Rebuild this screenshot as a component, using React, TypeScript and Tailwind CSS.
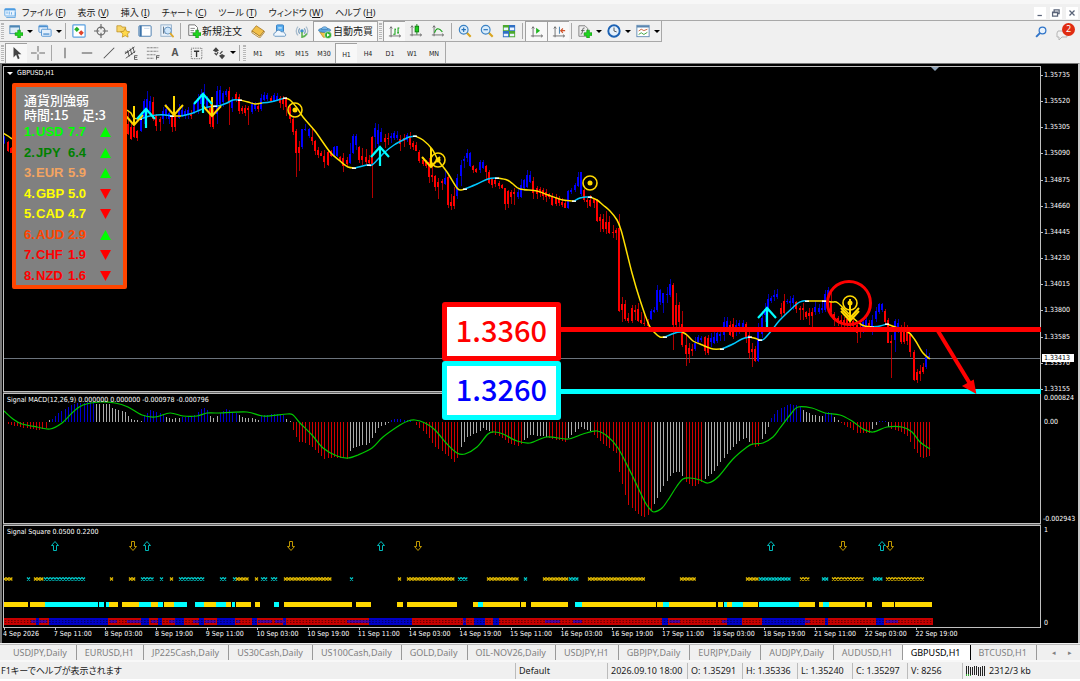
import type { ReactNode } from "react"
import clsx from "clsx"

const STEP = 3.168
const barX = (k: number) => 4.4 + STEP * k

// one token per bar: colour, high-low, body top-bottom
const CANDLES: { from: number; bars: string }[] = [
    { from: 0, bars: "b136-144/137-143 r141-152/142-151 r147-153/148-153" },
    {
        from: 39,
        bars: `r112-135/124-134 r122-140/127-139 r126-138/127-137 r130-141/131-138 b112-132/114-131
        b99-124/101-119 b91-114/99-109 b96-114/101-111 r97-121/102-119 r114-131/116-126 r117-131/119-122
        b107-124/111-119 b104-119/109-116 b109-124/113-119 r114-132/117-127 r114-131/116-127 b104-119/108-118
        b107-117/110-115 b109-119/111-116 b107-119/110-115 r110-119/113-116 b101-114/104-112 b94-114/98-111
        b89-107/94-104 b84-104/92-100 b96-109/98-107 r104-127/108-124 r107-129/110-127 b86-124/91-114
        b86-106/90-104 b91-107/93-102 b89-97/91-95 r87-125/91-102 b97-112/100-108 r92-102/94-100
        r94-114/97-111 r106-114/108-111 r105-116/108-113 r106-125/108-110 b102-114/104-112 b102-111/104-109
        r104-112/106-109 b94-111/98-109 b92-101/95-100 b93-101/95-99`,
    },
    {
        from: 84,
        bars: `r96-102/98-101 b93-102/95-101 b93-101/96-100 r96-108/98-103 r96-110/98-104 r97-116/98-107
        r104-123/107-119 r117-135/119-132 r129-177/131-153 r141-171/147-153 b129-149/129-147 b124-131/129-130
        b128-138/129-136 r127-145/137-141 r140-155/141-151 r147-158/150-155 r151-156/153-156 r150-168/156-162
        r151-166/152-165 r150-157/151-156 b146-157/147-156 b146-157/146-156 r156-162/157-161 r153-172/158-166
        r157-166/160-164 b143-164/154-163 b134-154/136-153 b134-150/136-145 r146-163/147-160 r148-165/156-160
        r149-165/157-162 r155-166/160-163 r136-198/137-164 b123-148/128-137 b124-149/130-144 b128-142/132-142
        r134-148/138-142 r133-145/138-139 b133-143/136-138 b131-140/133-138 b131-140/135-138 r135-151/139-144
        r134-147/138-141 b133-142/135-140 r132-149/136-145 r141-150/143-147 r142-151/145-151 r150-163/152-161
        r157-166/160-164 r160-168/162-166 r158-183/162-177 r165-182/175-177 r175-191/176-187 r178-199/182-187
        r179-190/181-183 b171-185/178-184 r175-208/177-205 r194-210/202-206 r187-209/196-206 b174-199/178-196
        b160-186/165-176 b156-168/159-161 b149-162/153-158 b152-167/153-166 r165-173/166-170 r168-173/169-172
        b160-173/162-170 b160-169/162-168 r165-179/166-172 r170-184/172-183 r178-188/179-185 r179-187/180-184
        r181-189/183-186 r184-189/185-188 r188-210/188-204 r190-208/191-204 r190-204/192-197 r188-205/192-194
        b188-199/192-197 b179-198/185-197 b179-191/180-188 b170-188/175-187 b171-183/175-182 r177-199/181-193
        r186-199/188-194 r187-197/189-193 r188-200/190-196 r189-202/192-197 r193-199/194-197 r193-206/197-205
        r194-206/197-204 r196-206/199-203 r198-207/202-205`,
    },
    {
        from: 177,
        bars: `r200-208/203-208 b190-209/191-208 b188-194/190-192 b183-192/185-190 b172-187/177-186 b172-196/172-194
        r189-202/190-200 r197-208/200-202 r195-207/200-206 r198-208/199-203 r199-222/200-221 r214-232/217-221
        r214-232/219-229 r211-234/222-229 r216-234/222-233 r225-238/232-233 r228-240/230-233 r214-312/228-311
        r297-322/304-310 r300-321/304-319 r313-323/318-321 r305-323/308-321 r305-320/310-312 r303-322/309-321
        r312-324/320-323 r313-326/323-324 r319-328/322-326 b309-320/311-319 b307-313/310-312 b285-312/290-310
        b289-305/290-302 b293-313/293-303 b287-303/294-295 b279-297/284-295 r283-350/285-325 r293-329/305-325
        r302-327/305-322 r311-347/324-345 r335-366/345-354 r343-363/348-354 r344-356/349-351 b337-351/343-349
        b335-344/337-342 b336-342/338-340 r336-355/337-351 r335-355/338-353 b333-347/338-342 b330-344/337-343
        b327-343/333-341 b328-341/334-336 b317-341/322-335 b317-328/321-327 r321-336/325-335 r318-339/324-337
        b320-336/325-330 b320-334/323-326 b320-331/323-328 r322-343/324-338 r331-359/335-353 r343-367/349-352
        r346-362/349-361 b323-362/328-361 b311-338/318-334 b303-322/309-315 b294-312/299-310 b296-303/298-301
        b290-301/295-297 b289-299/294-297 r303-317/308-314 r294-315/301-313 b299-304/301-302 b296-308/301-303
        b295-310/298-303 r301-313/302-309 r306-320/308-310 r303-320/308-310 r311-319/312-317 r308-325/313-316
        r308-328/312-316 b301-315/307-312 b304-314/308-312 b302-313/308-310 b290-312/294-310 b287-303/290-300
        r290-315/302-312 r312-326/314-320 r316-326/318-323 r315-327/320-324 r317-328/320-325 r316-327/319-324
        r317-328/320-326 r318-328/321-326 r322-343/325-333 r325-338/327-332 b318-333/322-330 b316-330/320-326
        r320-332/323-329 b315-335/320-331 b307-322/311-319 b303-314/304-312 b303-312/304-310 r309-325/311-322
        r318-343/320-343 r335-378/341-343 b319-352/321-340 b319-333/323-330 r325-344/328-342 r322-344/328-342
        r325-345/330-341 r333-357/335-352 r350-381/352-380 r369-383/372-380 r365-381/371-374 r363-374/367-372
        b349-369/357-367 b353-358/356-357`,
    },
]

const CANDLE_LIST = CANDLES.flatMap(({ from, bars }) =>
    bars
        .trim()
        .split(/\s+/)
        .map((token, i) => {
            const [high, low, top, bottom] = token.slice(1).split(/[-/]/).map(Number)
            return { x: Math.round(barX(from + i)), up: token[0] === "b", high, low, top, bottom }
        })
)

const AVERAGE: [string, string][] = [
    ["#ffe000", "3,133 8,136 12,139"],
    ["#ffe000", "127,110 131,113 134,118 140,119"],
    ["#00c8ff", "140,119 150,116 157,115 165,115 172,116"],
    ["#ffe000", "172,116 181,116"],
    ["#00c8ff", "181,116 193,113 200,110 208,107 218,106 227,103 233,100 240,100"],
    ["#ffe000", "240,100 248,102 255,104 262,103"],
    ["#00c8ff", "262,103 270,102 278,100 285,98"],
    ["#ffe000", "285,98 290,100 297,108 303,117 315,131 330,152 340,161 348,167 355,168"],
    ["#00c8ff", "355,168 367,165 372,165 379,158 385,152 394,145 403,140 409,137 415,136"],
    ["#ffe000", "415,136 423,140 432,149 438,160 447,172 457,188 461,190 465,189"],
    ["#00c8ff", "465,189 477,184 488,179 497,178"],
    ["#ffe000", "497,178 507,180 513,184 520,189 537,191 548,195 563,200 574,201"],
    ["#00c8ff", "574,201 580,198 586,197 590,197"],
    ["#ffe000", "590,197 597,200 603,205 610,211 617,220 621,230 625,245 632,273 640,300 649,325 655,333 660,337 665,337"],
    ["#00c8ff", "665,337 675,333 682,332"],
    ["#ffe000", "682,332 687,335 693,341 700,344 707,347 713,349 722,349"],
    ["#00c8ff", "722,349 733,344 742,339 750,337"],
    ["#ffe000", "750,337 754,338 760,340"],
    ["#00c8ff", "760,340 764,339 772,330 779,321 787,313 798,303 803,301 807,301"],
    ["#ffe000", "807,301 824,301 832,302 838,303 850,315 862,325 872,327"],
    ["#00c8ff", "872,327 880,326 887,324"],
    ["#ffe000", "887,324 895,327 908,332 915,340 923,353 930,359"],
]

// white dots where the average turns
const TURNS = [[140, 119], [172, 116], [215, 106], [240, 100], [285, 98], [354, 168], [369, 165], [415, 136], [465, 189], [497, 178], [574, 201], [590, 197], [665, 337], [722, 349], [750, 337], [760, 340], [807, 301], [824, 301], [872, 327], [887, 324]]

// histogram runs: colour, then x,y points the bar tips follow
const MACD: [string, number[][]][] = [
    ["#d00000", [[6, 424], [11, 425], [20, 427], [38, 430], [43, 429], [46, 428]]],
    ["#aaaaaa", [[47, 419], [50, 420]]],
    ["#0000d0", [[51, 420], [58, 413], [65, 409], [75, 403], [94, 402]]],
    ["#aaaaaa", [[95, 404], [109, 404], [112, 408], [125, 412], [130, 419], [142, 421]]],
    ["#0000d0", [[143, 416], [150, 410], [155, 412], [164, 414]]],
    ["#aaaaaa", [[164, 416], [172, 419], [181, 417]]],
    ["#0000d0", [[181, 417], [190, 416], [196, 414], [203, 407], [208, 411]]],
    ["#aaaaaa", [[208, 414], [214, 418], [219, 414]]],
    ["#0000d0", [[219, 413], [226, 409], [238, 414]]],
    ["#aaaaaa", [[238, 415], [246, 418], [252, 418], [258, 420], [261, 418]]],
    ["#0000d0", [[261, 416], [272, 414], [284, 415]]],
    ["#aaaaaa", [[284, 417], [290, 421]]],
    ["#d00000", [[291, 426], [296, 437], [299, 442], [306, 443], [312, 447], [320, 455], [324, 459], [333, 457], [347, 459]]],
    ["#aaaaaa", [[347, 454], [353, 448], [368, 444], [371, 440], [375, 433], [379, 427], [388, 423]]],
    ["#0000d0", [[390, 420], [398, 419], [412, 421]]],
    ["#d00000", [[414, 423], [425, 433], [435, 447], [443, 452], [454, 462], [458, 457]]],
    ["#aaaaaa", [[459, 450], [467, 437], [477, 433], [483, 428], [490, 432]]],
    ["#d00000", [[490, 432], [500, 437], [510, 444], [517, 446], [522, 443]]],
    ["#aaaaaa", [[522, 441], [531, 435], [547, 437]]],
    ["#d00000", [[547, 438], [567, 442]]],
    ["#aaaaaa", [[567, 439], [580, 427], [592, 432]]],
    ["#d00000", [[592, 433], [602, 443], [616, 453], [619, 472], [628, 505], [640, 516], [646, 517], [652, 508]]],
    ["#aaaaaa", [[652, 508], [660, 492], [667, 480], [672, 473], [680, 472], [684, 478]]],
    ["#d00000", [[685, 482], [693, 487], [703, 481]]],
    ["#aaaaaa", [[703, 480], [713, 472], [722, 460], [730, 450], [740, 440], [746, 438], [750, 443]]],
    ["#d00000", [[751, 444], [756, 448], [760, 444]]],
    ["#aaaaaa", [[760, 442], [765, 433], [770, 422]]],
    ["#0000d0", [[770, 419], [777, 410], [790, 404], [801, 406]]],
    ["#aaaaaa", [[801, 409], [812, 415], [823, 416]]],
    ["#0000d0", [[823, 413], [828, 412], [833, 413]]],
    ["#aaaaaa", [[833, 415], [839, 422]]],
    ["#d00000", [[840, 423], [850, 428], [857, 433], [870, 433]]],
    ["#aaaaaa", [[870, 431], [877, 424]]],
    ["#0000d0", [[878, 421], [887, 421]]],
    ["#aaaaaa", [[887, 426], [890, 428]]],
    ["#d00000", [[890, 429], [900, 431], [908, 437], [913, 448], [920, 457], [923, 458], [927, 457], [931, 455]]],
]

const tipAt = (points: number[][], x: number) => {
    for (let i = 1; i < points.length; i++) {
        const [x0, y0] = points[i - 1]
        const [x1, y1] = points[i]
        if (x <= x1) return y0 + ((y1 - y0) * Math.max(0, x - x0)) / (x1 - x0)
    }
    return points[points.length - 1][1]
}

const MACD_BARS = Array.from({ length: 293 }, (_, k) => barX(k)).flatMap((x) => {
    const run = MACD.find(([, p]) => x >= p[0][0] && x < p[p.length - 1][0])
    return run ? [{ x, color: run[0], y: tipAt(run[1], x) }] : []
})

const SIGNAL_LINE =
    "4,411 13,419 22,424 37,427 50,429 62,423 73,412 83,405 100,402 115,403 128,407 142,415 155,417 170,413 183,416 197,416 207,413 217,413 247,412 263,416 287,414 293,415 300,423 312,435 323,448 337,456 348,458 358,455 372,448 383,437 400,425 408,421 415,420 425,423 435,430 447,444 457,453 465,454 477,447 488,434 495,432 503,434 517,441 530,443 547,437 568,439 583,434 597,431 607,436 618,448 632,475 645,502 650,509 654,512 662,508 668,500 677,486 683,479 690,478 700,480 708,483 718,477 733,459 747,447 753,444 763,443 773,437 780,428 790,415 798,407 812,408 825,413 840,415 852,421 863,429 873,432 887,427 902,427 912,432 920,442 930,449"

// rounds the corners of a list of "x,y" points
const smooth = (points: string) => {
    const p = points.split(" ").map((pair) => pair.split(",").map(Number))
    return p
        .map(([x, y], i) => {
            if (i === 0) return `M${x} ${y}`
            const a = p[i - 2] ?? p[i - 1]
            const b = p[i - 1]
            const next = p[i + 1] ?? p[i]
            return `C${b[0] + (x - a[0]) / 6} ${b[1] + (y - a[1]) / 6} ${x - (next[0] - b[0]) / 6} ${y - (next[1] - b[1]) / 6} ${x} ${y}`
        })
        .join("")
}

type Span = [number, number]

const CROSS_GOLD: Span[] = [[3, 12], [34, 44], [110, 113], [129, 136], [170, 173], [236, 250], [255, 259], [284, 332], [398, 402], [407, 456], [487, 519], [543, 567], [588, 646], [680, 697], [746, 759], [800, 811], [832, 864], [886, 925]]
const CROSS_CYAN: Span[] = [[27, 30], [44, 84], [141, 154], [160, 163], [179, 205], [220, 227], [233, 236], [261, 268], [271, 278], [350, 353], [458, 468], [524, 528], [569, 579], [759, 792], [822, 829], [873, 883]]
const BLOCK_GOLD: Span[] = [[4, 28], [30, 45], [109, 118], [122, 139], [151, 158], [164, 174], [204, 216], [226, 231], [236, 251], [255, 260], [284, 352], [356, 371], [397, 403], [407, 457], [473, 478], [483, 520], [521, 526], [531, 568], [582, 656], [657, 663], [669, 716], [718, 723], [727, 732], [743, 758], [799, 815], [819, 823], [829, 865], [867, 872], [882, 894], [895, 932]]
const BLOCK_CYAN: Span[] = [[45, 98], [99, 104], [106, 109], [139, 151], [158, 163], [174, 187], [195, 204], [216, 226], [232, 235], [274, 279], [478, 483], [575, 582], [663, 669], [724, 727], [732, 743], [759, 799], [823, 829]]
const BASE_RED: Span[] = [[4, 36], [39, 49], [108, 141], [149, 158], [162, 175], [184, 199], [204, 217], [235, 252], [257, 283], [286, 369], [412, 463], [466, 474], [485, 493], [499, 662], [668, 727], [742, 762], [805, 825], [828, 876], [884, 933]]
// red cells that touch a blue run
const BASE_MIXED: Span[] = [[31, 36], [39, 47], [110, 117], [127, 141], [151, 157], [169, 175], [193, 199], [205, 216], [236, 240], [258, 272], [275, 285], [347, 369], [463, 466], [545, 560], [573, 582], [669, 680], [722, 727], [805, 810], [886, 898]]
const UP_ARROWS = [55, 147, 381, 771, 882]
const DOWN_ARROWS = [133, 291, 418, 843, 890]

const PRICES = ["1.35735", "1.35520", "1.35305", "1.35090", "1.34875", "1.34660", "1.34445", "1.34230", "1.34015", "1.33800", "1.33585", "1.33370", "1.33155"]
const TIMES = ["4 Sep 2026", "7 Sep 11:00", "8 Sep 03:00", "8 Sep 19:00", "9 Sep 11:00", "10 Sep 03:00", "10 Sep 19:00", "11 Sep 11:00", "14 Sep 03:00", "14 Sep 19:00", "15 Sep 11:00", "16 Sep 03:00", "16 Sep 19:00", "17 Sep 11:00", "18 Sep 03:00", "18 Sep 19:00", "21 Sep 11:00", "22 Sep 03:00", "22 Sep 19:00"]

const STRENGTH = [
    { name: "USD", value: "7.7", up: true, className: "text-[#00ff00]" },
    { name: "JPY", value: "6.4", up: true, className: "text-[#008000]" },
    { name: "EUR", value: "5.9", up: true, className: "text-[#f4a460]" },
    { name: "GBP", value: "5.0", up: false, className: "text-[#ffff00]" },
    { name: "CAD", value: "4.7", up: false, className: "text-[#ffff00]" },
    { name: "AUD", value: "2.9", up: true, className: "text-[#ff4500]" },
    { name: "CHF", value: "1.9", up: false, className: "text-[#ff0000]" },
    { name: "NZD", value: "1.6", up: false, className: "text-[#ff0000]" },
]

const MENU = [["ファイル", "F"], ["表示", "V"], ["挿入", "I"], ["チャート", "C"], ["ツール", "T"], ["ウィンドウ", "W"], ["ヘルプ", "H"]]
const TABS = ["USDJPY,Daily", "EURUSD,H1", "JP225Cash,Daily", "US30Cash,Daily", "US100Cash,Daily", "GOLD,Daily", "OIL-NOV26,Daily", "USDJPY,H1", "GBPJPY,Daily", "EURJPY,Daily", "AUDJPY,Daily", "AUDUSD,H1", "GBPUSD,H1", "BTCUSD,H1"]
const PERIODS = ["M1", "M5", "M15", "M30", "H1", "H4", "D1", "W1", "MN"]

const Icon = ({ children, className = "size-4" }: { children: ReactNode; className?: string }) => (
    <svg viewBox="0 0 16 16" fill="none" className={clsx("shrink-0", className)} aria-hidden="true">
        {children}
    </svg>
)

const Plus = () => <path d="M10 7h3v3h3v3h-3v3h-3v-3H7v-3h3z" fill="#1fd81f" stroke="#0a8a0a" strokeWidth=".7" />
const Axes = () => <path d="M3.500 2v12M1 12.500h13M2 4l1.500-2L5 4M12.500 11l2 1.500-2 1.500" stroke="#666" />

const icons = {
    newChart: (
        <>
            <rect x="1" y="2" width="11" height="9" fill="#dcecf8" stroke="#4d86b5" />
            <path d="M1 3h11" stroke="#4d86b5" strokeWidth="2" />
            <Plus />
        </>
    ),
    profiles: (
        <>
            <rect x="1" y="1.500" width="10" height="8" rx="1" fill="#e3effb" stroke="#4b8fd0" />
            <path d="M1 3h10" stroke="#4b8fd0" strokeWidth="1.500" />
            <rect x="4" y="6" width="11" height="8" rx="1" fill="#e3effb" stroke="#4b8fd0" />
            <path d="M6 11.500h7" stroke="#4b8fd0" strokeWidth="1.500" />
        </>
    ),
    market: (
        <>
            <rect x="1" y="1" width="14" height="14" rx="1" fill="#fff" stroke="#5aa0e0" strokeWidth="1.400" />
            <path d="m5.500 3 3 3-3 3-3-3z" fill="#22b022" />
            <path d="m10.500 7 3 3-3 3-3-3z" fill="#e0442a" />
        </>
    ),
    target: (
        <>
            <circle cx="8" cy="8" r="4.500" stroke="#666" strokeWidth="1.300" />
            <path d="M8 0v6M8 10v6M0 8h6M10 8h6" stroke="#666" strokeWidth="1.300" />
        </>
    ),
    navigator: (
        <>
            <path d="M1 2h5l1 1.500h4V9H1z" fill="#f8d66a" stroke="#b98a1b" strokeWidth=".8" />
            <path d="m10.500 5 1.700 3.300 3.600.5-2.600 2.600.6 3.600-3.300-1.700L7.200 15l.6-3.600-2.600-2.600 3.600-.5z" fill="#ffd94a" stroke="#b98a1b" strokeWidth=".8" />
        </>
    ),
    terminal: (
        <>
            <rect x="1" y="2" width="14" height="12" rx="1" fill="#fff" stroke="#3d74aa" />
            <path d="M3 2v12" stroke="#3d74aa" strokeWidth="2.500" />
            <path d="M7 5h6" stroke="#c3d6e8" />
        </>
    ),
    tester: (
        <>
            <rect x="1" y="1" width="12" height="13" fill="#eaf2fa" stroke="#8aa9c6" />
            <path d="M4 3v8M6 5v6" stroke="#567" />
            <circle cx="9" cy="7.500" r="4" fill="#cfe6fa" stroke="#5b8dbd" />
            <path d="m11.500 10.500 4 4.500" stroke="#e0a826" strokeWidth="2" />
        </>
    ),
    order: (
        <>
            <path d="M2 1h7l3 3v9H2z" fill="#fff" stroke="#666" />
            <path d="M4 5h5M4 7.500h4M4 10h3" stroke="#777" />
            <Plus />
        </>
    ),
    book: (
        <>
            <path d="M1 8 6 2l9 6-5 6z" fill="#f2c04a" stroke="#9b6a12" strokeWidth=".8" />
            <path d="m1 8 9 6 5-6v1.800L10 16 1 10z" fill="#fff1c4" stroke="#9b6a12" strokeWidth=".8" />
        </>
    ),
    cloud: (
        <>
            <rect x="4" y="1" width="8" height="8" rx="1" fill="#58aef0" stroke="#2b78c0" />
            <path d="M6 4.500h4" stroke="#fff" />
            <path d="M2 14a2.300 2.300 0 0 1 1-4.300A3.500 3.500 0 0 1 9.500 9a3 3 0 0 1 4 2 1.600 1.600 0 0 1 0 3z" fill="#eef6fe" stroke="#5d8fbd" />
        </>
    ),
    signal: (
        <>
            <path d="M3.500 13a7 7 0 0 1 0-10M12.500 13a7 7 0 0 0 0-10" stroke="#a9bccd" strokeWidth="1.500" />
            <path d="M5.500 11a4.200 4.200 0 0 1 0-6M10.500 11a4.200 4.200 0 0 0 0-6" stroke="#6b95b8" strokeWidth="1.300" />
            <circle cx="8" cy="8" r="2" fill="#3b8fc8" />
            <path d="M8 9v6c3-.5 4.500-2 5.500-4" stroke="#5bb44f" strokeWidth="1.800" />
        </>
    ),
    robot: (
        <>
            <path d="M2 8h12l-2 6H6z" fill="#f3c445" stroke="#a9791a" strokeWidth=".7" />
            <ellipse cx="7.500" cy="6" rx="7" ry="2.500" fill="#5aa5de" stroke="#2f6fa5" strokeWidth=".7" />
            <path d="M4 5c0-4 7-4 7 0z" fill="#7dbdf0" stroke="#2f6fa5" strokeWidth=".7" />
            <circle cx="11.500" cy="11.500" r="4" fill="#2fae2f" stroke="#fff" strokeWidth=".6" />
            <path d="m10.300 9.500 3.200 2-3.200 2z" fill="#fff" />
        </>
    ),
    bars: (
        <>
            <Axes />
            <path d="M6 10.500h2M8 4v7M8 5h1M10.500 9h2M11.500 3v6M11 3.500h2" stroke="#16a016" strokeWidth="1.200" />
        </>
    ),
    candle: (
        <>
            <Axes />
            <path d="M9 0v12" stroke="#0a7a0a" />
            <rect x="7" y="2.500" width="4" height="6.500" fill="#1fd01f" stroke="#0a7a0a" />
        </>
    ),
    line: (
        <>
            <Axes />
            <path d="M4 10c2-6 5-6 9-1" stroke="#16a016" strokeWidth="1.200" />
        </>
    ),
    zoomIn: (
        <>
            <path d="m9.500 9.500 5 5" stroke="#d9a520" strokeWidth="2.500" />
            <circle cx="6.500" cy="6.500" r="5" fill="#d9ecfb" stroke="#3b82c4" strokeWidth="1.300" />
            <path d="M4 6.500h5M6.500 4v5" stroke="#2470b8" strokeWidth="1.300" />
        </>
    ),
    zoomOut: (
        <>
            <path d="m9.500 9.500 5 5" stroke="#d9a520" strokeWidth="2.500" />
            <circle cx="6.500" cy="6.500" r="5" fill="#d9ecfb" stroke="#3b82c4" strokeWidth="1.300" />
            <path d="M4 6.500h5" stroke="#2470b8" strokeWidth="1.300" />
        </>
    ),
    tile: (
        <>
            <path d="M1 1h7v7H1zM8 8h7v7H8z" fill="#4ba82e" />
            <path d="M8 1h7v7H8zM1 8h7v7H1z" fill="#2f6fc4" />
            <path d="M2 4h5v3H2zM9 4h5v3H9zM2 11h5v3H2zM9 11h5v3H9z" fill="#eaf4ff" />
        </>
    ),
    scroll: (
        <>
            <Axes />
            <path d="m7 3 4.500 3.500L7 10z" fill="#1fb51f" />
        </>
    ),
    shift: (
        <>
            <Axes />
            <path d="M8.500 2v8" stroke="#2f6fa5" />
            <path d="M15 6.500h-5m2.500-2.500L10 6.500 12.500 9" stroke="#d0532a" strokeWidth="1.300" />
        </>
    ),
    indicator: (
        <>
            <path d="M1 2h7l3 3v9H1z" fill="#eee" stroke="#777" />
            <path d="M7.500 4.500C5 4 5.500 7 5 9s-1 3-2 2.500M3.500 7.500h4" stroke="#555" />
            <Plus />
        </>
    ),
    clock: (
        <>
            <circle cx="8" cy="8" r="6.500" fill="#e5f1fc" stroke="#1d63b5" strokeWidth="2.200" />
            <path d="M8 4v4l3 1" stroke="#444" />
        </>
    ),
    template: (
        <>
            <rect x="1" y="1.500" width="14" height="13" fill="#fff" stroke="#5a86b0" />
            <path d="M1 3h14" stroke="#5a86b0" strokeWidth="2" />
            <path d="m3 8 3-2 3 1.500L13 6" stroke="#c4532a" />
            <path d="m3 12 3-2 3 2 4-2.500" stroke="#2d9a2d" />
        </>
    ),
    cursor: <path d="M4 1v12l3-3 2 5 2-1-2-4.500h4z" fill="#444" />,
    cross: <path d="M8 0v6.500M8 9.500V16M0 8h6.500M9.500 8H16" stroke="#555" />,
    vline: <path d="M8 2v12" stroke="#555" strokeWidth="1.200" />,
    hline: <path d="M2 8h12" stroke="#555" strokeWidth="1.200" />,
    trend: <path d="M2 14 14 2" stroke="#555" strokeWidth="1.200" />,
    channel: (
        <>
            <path d="m1 9 11-8M2 14 13 6M4 5l2 7M7 3l2 7M10 1l2 7M1 7h4" stroke="#444" />
            <path d="M15.500 11H12v4.500h3.500M12 13h3" stroke="#444" strokeWidth=".9" />
        </>
    ),
    fibo: (
        <>
            <path d="M1 2h13M1 6h13M1 10h10M1 14h8" stroke="#555" strokeDasharray="1 .6" />
            <path d="M12 15.500V11h3.500M12 13h3" stroke="#444" strokeWidth=".9" />
        </>
    ),
    label: (
        <>
            <rect x="1.500" y="2.500" width="12" height="12" stroke="#555" strokeDasharray="1 1" />
            <path d="M4.500 6h6M7.500 6v6.500" stroke="#333" strokeWidth="1.500" />
        </>
    ),
    arrows: (
        <>
            <path d="m1 5 3.500-3.500L8 5 4.500 7zM8 11l3.500-2 3.500 2-3.500 4z" fill="#444" />
            <path d="m3 8 2 2 2-3m2 2 3-3" stroke="#444" strokeWidth="1.300" />
        </>
    ),
}

type IconName = keyof typeof icons

const Caret = () => <span className="ml-1 border-x-[3px] border-t-[3px] border-x-transparent border-t-black" />

const Tool = ({ icon, title, pressed, menu, children }: { icon: IconName; title: string; pressed?: boolean; menu?: boolean; children?: ReactNode }) => (
    <button
        type="button"
        title={title}
        className={clsx(
            "flex h-5 shrink-0 items-center",
            menu || children ? "pl-1" : "w-[22px] justify-center",
            menu && "w-[29px]",
            children && "w-16 gap-px text-[10px] whitespace-nowrap",
            pressed && "border-l border-t border-[#a0a0a0] bg-[#f8f8f8]"
        )}
    >
        <Icon className="size-[14px]">{icons[icon]}</Icon>
        {children}
        {menu && <Caret />}
    </button>
)

const Divider = () => <span className="mx-[2px] h-4 w-px shrink-0 bg-[#a8a8a8]" />
const Grip = () => <span className="mx-px h-4 w-[3px] shrink-0 border-y border-[#b8b8b8] bg-[repeating-linear-gradient(#b8b8b8_0_1px,#f4f4f4_1px_2px)]" />

const MenuBar = () => (
    <div className="flex h-[17px] items-center border-b border-[#a8a8a8] pl-1 pr-[2px] pt-px">
        <Icon className="size-3">
            <rect x="1" y="2" width="14" height="10" rx="1" fill="#e6f3ff" stroke="#4b9be0" />
            <path d="M1 3.500h14" stroke="#4b9be0" strokeWidth="2" />
            <path d="M3 14h12V7M4 9V6m3 4V6m3 4V7" stroke="#4b9be0" />
        </Icon>
        <nav className="ml-[6px] flex gap-3 text-[9px] leading-4 [font-feature-settings:'palt']">
            {MENU.map(([name, key]) => (
                <button type="button" key={name} className="whitespace-nowrap">
                    {name} (<u>{key}</u>)
                </button>
            ))}
        </nav>
        <div className="ml-auto flex gap-1">
            {["M4 12h7", "M5 6V3h8v6h-3M2.500 6.500h8V13h-8zM3 7.500h7", "m4 4 8 8M12 4l-8 8"].map((d, i) => (
                <button type="button" key={d} aria-label={["最小化", "元に戻す", "閉じる"][i]} className="flex h-3 w-3 items-center justify-center bg-white">
                    <Icon className="size-[10px]">
                        <path d={d} stroke="#5a6478" strokeWidth="2" />
                    </Icon>
                </button>
            ))}
        </div>
    </div>
)

const Toolbars = () => (
    <>
        <div className="flex h-[21px] items-center">
            <div className="flex h-[21px] items-center border-b border-r border-[#a8a8a8]">
                <Grip />
                <Tool icon="newChart" title="新規チャート" menu />
                <Tool icon="profiles" title="チャートの組表示" menu />
                <Divider />
                <Tool icon="market" title="気配値表示" />
                <Tool icon="target" title="データウィンドウ" />
                <Tool icon="navigator" title="ナビゲーター" />
                <Tool icon="terminal" title="ターミナル" />
                <Tool icon="tester" title="ストラテジーテスター" />
                <Divider />
                <Tool icon="order" title="新規注文">新規注文</Tool>
                <Tool icon="book" title="MetaEditor" />
                <Tool icon="cloud" title="MQL5" />
                <Tool icon="signal" title="シグナル" />
                <Tool icon="robot" title="自動売買" pressed>自動売買</Tool>
                <span className="h-5 w-px bg-[#a8a8a8]" />
                <Grip />
                <Tool icon="bars" title="バーチャート" pressed />
                <Tool icon="candle" title="ローソク足" />
                <Tool icon="line" title="ラインチャート" />
                <Divider />
                <Tool icon="zoomIn" title="拡大" />
                <Tool icon="zoomOut" title="縮小" />
                <Tool icon="tile" title="整列" />
                <Divider />
                <Tool icon="scroll" title="自動スクロール" pressed />
                <Tool icon="shift" title="チャートシフト" pressed />
                <Divider />
                <Tool icon="indicator" title="インディケーター" menu />
                <Tool icon="clock" title="時間足設定" menu />
                <Tool icon="template" title="定型チャート" menu />
            </div>
            <div className="ml-auto mr-[5px] flex items-center gap-2">
                <button type="button" aria-label="検索">
                    <Icon className="size-3">
                        <circle cx="10" cy="6" r="4.500" fill="#e8f2fc" stroke="#2f74c8" strokeWidth="1.600" />
                        <path d="m6.500 9.500-5 5" stroke="#2f74c8" strokeWidth="2.500" />
                    </Icon>
                </button>
                <button type="button" aria-label="通知 2" className="relative h-[18px] w-[20px]">
                    <svg viewBox="0 0 20 18" className="h-full w-full" aria-hidden="true">
                        <path d="M3 8h9v6H7l-3 3v-3H2v-4z" fill="#f2f2f2" stroke="#b5b5b5" />
                    </svg>
                    <span className="absolute right-0 top-0 flex size-[13px] items-center justify-center rounded-full bg-[#e02c12] text-[9px] text-white">2</span>
                </button>
            </div>
        </div>
        <div className="flex h-[21px]">
            <div className="flex items-center border-r border-[#a8a8a8]">
                <Grip />
                <Tool icon="cursor" title="カーソル" pressed />
                <Tool icon="cross" title="クロスヘア" />
                <Divider />
                <Tool icon="vline" title="垂直線" />
                <Tool icon="hline" title="水平線" />
                <Tool icon="trend" title="トレンドライン" />
                <Tool icon="channel" title="等距離チャネル" />
                <Tool icon="fibo" title="フィボナッチ" />
                <button type="button" title="テキスト" className="h-5 w-[22px] text-[10px] font-bold text-[#555]">A</button>
                <Tool icon="label" title="ラベル" />
                <Tool icon="arrows" title="アロー" menu />
                <Divider />
                <Grip />
                {PERIODS.map((period) => (
                    <button
                        type="button"
                        key={period}
                        className={clsx(
                            "h-5 w-[22px] pt-1 text-center font-['DejaVu_Sans_Condensed','DejaVu_Sans',sans-serif] text-[7px] text-[#222]",
                            period === "H1" && "border-l border-t border-[#a0a0a0] bg-[#f8f8f8]"
                        )}
                    >
                        {period}
                    </button>
                ))}
            </div>
        </div>
    </>
)

const PriceChart = () => (
    <svg className="block h-full w-full" role="img" aria-label="GBPUSD H1">
        <g transform="translate(-4 -67)">
            <rect x="4" y="358" width="100%" height="1" fill="#6b737c" />
            <g shapeRendering="crispEdges">
                {CANDLE_LIST.map((c) => (
                    <g key={c.x} fill={c.up ? "#0000ff" : "#ff0000"}>
                        <rect x={c.x} y={c.high} width="1" height={c.low - c.high} opacity=".7" />
                        <rect x={c.x - 1} y={c.top} width="2" height={Math.max(1, c.bottom - c.top)} />
                    </g>
                ))}
            </g>
            <g fill="none" strokeWidth="1.500" strokeLinejoin="round">
                {AVERAGE.map(([color, points]) => (
                    <path key={points} d={smooth(points)} stroke={color} />
                ))}
            </g>
            {TURNS.map(([x, y]) => (
                <rect key={x} x={x - 2} y={y - 0.5} width="4" height="1.400" fill="#fff" />
            ))}
            <g fill="none" stroke="#ffd800" strokeWidth="2">
                {[[134, 106], [174, 96], [212, 97], [431, 148], [850, 302], [850, 299]].map(([x, y]) => (
                    <path key={`${x}-${y}`} d={`M${x} ${y}v19m-9-10 9 10 9-10`} />
                ))}
                {[[295, 110], [438, 160], [590, 183], [850, 303]].map(([x, y]) => (
                    <g key={x}>
                        <circle cx={x} cy={y} r="7" strokeWidth="1.600" />
                        <circle cx={x} cy={y} r="2.500" fill="#ffd800" stroke="none" />
                    </g>
                ))}
            </g>
            <g fill="none" stroke="#00ffff" strokeWidth="2.200">
                {[[146, 128], [203, 113], [380, 166], [767, 327]].map(([x, y]) => (
                    <path key={x} d={`M${x} ${y}v-18m-9 9 9-10 9 10`} />
                ))}
            </g>
            <path d="M931 67h8l-4 4z" fill="#8fa3b8" />
        </g>
    </svg>
)

const MacdChart = () => (
    <svg className="block h-full w-full" role="img" aria-label="MACD">
        <g transform="translate(-4 -394)">
            <g shapeRendering="crispEdges">
                {MACD_BARS.map(({ x, y, color }) => (
                    <rect key={x} x={x} y={Math.min(y, 422)} width="1" height={Math.max(1, Math.abs(y - 422))} fill={color} />
                ))}
            </g>
            <path d={smooth(SIGNAL_LINE)} fill="none" stroke="#00c800" strokeWidth="1.200" />
        </g>
    </svg>
)

const Crosses = ({ spans, color }: { spans: Span[]; color: string }) => (
    <path
        d={spans
            .flatMap(([a, b]) => Array.from({ length: Math.max(1, Math.round((b - a) / STEP)) }, (_, i) => `M${a + i * STEP} 577.500l3 3m0-3l-3 3`))
            .join("")}
        stroke={color}
        strokeWidth="1.200"
    />
)

const SquareChart = () => (
    <svg className="block h-full w-full" role="img" aria-label="Signal Square">
        <defs>
            <pattern id="cells" width={STEP} height="8" x="4" y="618" patternUnits="userSpaceOnUse">
                <rect width="1" height="1" x="1" y="2" fill="#000" opacity=".7" />
                <rect width="1" height="1" x="1" y="4" fill="#000" opacity=".7" />
            </pattern>
        </defs>
        <g transform="translate(-4 -526)">
            {UP_ARROWS.map((x) => (
                <path key={x} d={`M${x} 541.500l3.500 4h-2v5h-3v-5h-2z`} fill="none" stroke="#00b8b8" />
            ))}
            {DOWN_ARROWS.map((x) => (
                <path key={x} d={`M${x} 550.500l3.500-4h-2v-5h-3v5h-2z`} fill="none" stroke="#c09800" />
            ))}
            <Crosses spans={CROSS_GOLD} color="#e0b800" />
            <Crosses spans={CROSS_CYAN} color="#00c8c8" />
            {BLOCK_GOLD.map(([a, b]) => (
                <rect key={a} x={a} y="602" width={b - a} height="5" fill="#ffd800" />
            ))}
            {BLOCK_CYAN.map(([a, b]) => (
                <rect key={a} x={a} y="602" width={b - a} height="5" fill="#00ffff" />
            ))}
            <rect x="4" y="618" width="929" height="7" fill="#0000c8" />
            {BASE_RED.map(([a, b]) => (
                <rect key={a} x={a} y="618" width={b - a} height="7" fill="#c80000" />
            ))}
            {BASE_MIXED.map(([a, b]) => (
                <rect key={a} x={a} y="620" width={b - a} height="3" fill="#5000a0" />
            ))}
            <rect x="4" y="618" width="929" height="7" fill="url(#cells)" />
        </g>
    </svg>
)

const Pane = ({ title, className, axis, children }: { title: ReactNode; className: string; axis: ReactNode; children: ReactNode }) => (
    <section className={clsx("flex", className)}>
        <div className="relative min-w-0 flex-1 border border-[#c0c0c0]">
            {children}
            <h2 className="absolute left-[3px] top-px flex items-center gap-1 leading-[10px] whitespace-nowrap">{title}</h2>
        </div>
        <div className="relative flex w-[35px] flex-col justify-between pl-[3px] whitespace-nowrap">{axis}</div>
    </section>
)

const StrengthPanel = () => (
    <aside className="absolute left-[9px] top-[17px] h-[206px] w-[115px] rounded-[2px] border-4 border-[#ff4500] bg-[#808080] pl-2 pt-[5px] text-white">
        <div className="font-['Noto_Sans_CJK_JP',sans-serif] text-[13px] leading-[15px] font-medium">
            <p>通貨別強弱</p>
            <p>時間:15　足:3</p>
        </div>
        <ul className="flex h-[164px] flex-col font-['Liberation_Sans',sans-serif] text-[13px] font-bold">
            {STRENGTH.map((row, i) => (
                <li key={row.name} className={clsx("flex flex-1 items-center", row.className)}>
                    <span className="w-3">{i + 1}.</span>
                    <span className="w-8">{row.name}</span>
                    <span className="w-8">{row.value}</span>
                    <svg viewBox="0 0 12 11" className="h-[10px] w-[11px]" aria-hidden="true">
                        <path d={row.up ? "M6 0l6 11H0z" : "M6 11l6-11H0z"} fill={row.up ? "#00ff00" : "#ff0000"} />
                    </svg>
                </li>
            ))}
        </ul>
    </aside>
)

const PriceTag = ({ price, className }: { price: string; className: string }) => (
    <div className={clsx("flex h-[59px] w-[119px] items-center justify-center rounded-[3px] border-[5px] bg-white pb-1 text-[29px] leading-none font-medium", className)}>{price}</div>
)

const Chart = () => (
    <main className="border-x-2 border-t border-l-[#777] border-r-[#c8c8c8] border-t-[#777] bg-black pl-px pt-[2px] font-['DejaVu_Sans_Condensed','DejaVu_Sans',sans-serif] text-[7px] leading-[10px] text-white">
        <div className="relative mr-[2px]">
            <Pane
                className="h-[326px]"
                title={
                    <>
                        <span className="border-x-[3px] border-t-[3px] border-x-transparent border-t-white" />
                        GBPUSD,H1
                    </>
                }
                axis={
                    <>
                        <ol className="flex h-[328px] shrink-0 flex-col justify-between pt-1">
                            {PRICES.map((price) => (
                                <li key={price} className="relative before:absolute before:-left-[3px] before:top-[5px] before:h-px before:w-[2px] before:bg-[#c0c0c0]">
                                    {price}
                                </li>
                            ))}
                        </ol>
                        <span className="absolute left-px top-[288px] w-[32px] bg-white pl-[2px] leading-[8px] text-black">1.33413</span>
                    </>
                }
            >
                <PriceChart />
            </Pane>
            <div className="mr-[35px] h-px bg-[#666]" />
            <Pane
                className="h-[131px]"
                title="Signal MACD(12,26,9) 0.000000 0.000000 -0.000978 -0.000796"
                axis={
                    <>
                        <span>0.000824</span>
                        <span className="mb-[73px]">0.00</span>
                        <span className="-ml-px">-0.002943</span>
                    </>
                }
            >
                <MacdChart />
            </Pane>
            <div className="mr-[35px] h-px bg-[#666]" />
            <Pane
                className="h-[103px]"
                title="Signal Square 0.0500 0.2200"
                axis={
                    <>
                        <span>1</span>
                        <span>0</span>
                    </>
                }
            >
                <SquareChart />
            </Pane>
            <ol className="flex h-[15px] w-[963px]">
                {TIMES.map((time) => (
                    <li key={time} className="relative flex-1 basis-0 pt-px whitespace-nowrap before:absolute before:left-px before:top-0 before:h-[2px] before:w-px before:bg-[#c0c0c0]">
                        {time}
                    </li>
                ))}
            </ol>

            <StrengthPanel />
            <div className="absolute left-[439px] right-[35px] top-[236px] font-['Noto_Sans_CJK_JP',sans-serif]">
                <div className="flex items-center">
                    <PriceTag price="1.3360" className="border-[#ff0000] text-[#ff0000]" />
                    <span className="mb-[5px] h-[5px] flex-1 bg-[#ff0000]" />
                </div>
                <div className="flex items-center">
                    <PriceTag price="1.3260" className="border-[#00ffff] text-[#0000ff]" />
                    <span className="mt-[2px] h-[5px] flex-1 bg-[#00ffff]" />
                </div>
            </div>
            <svg className="pointer-events-none absolute inset-0 h-full w-full" aria-hidden="true">
                <g transform="translate(-3 -66)" stroke="#ff0000" fill="none">
                    <circle cx="849" cy="303" r="21.500" strokeWidth="3" />
                    <path d="M938 331l34 56" strokeWidth="4" />
                    <path d="M975 392l-11-6 9-5z" fill="#ff0000" strokeWidth="2" />
                </g>
            </svg>
        </div>
    </main>
)

export default function App() {
    return (
        <div className="bg-[#f0f0f0] font-['Noto_Sans','Noto_Sans_CJK_JP',sans-serif] text-[#1a1a1a]">
            <div className="h-1 bg-[#f7f7f7]" />
            <MenuBar />
            <Toolbars />
            <Chart />
            <nav className="mt-px flex h-[16px] items-center overflow-hidden border-t border-[#bbb] pl-[5px] text-[9px] leading-[15px] text-[#808080]">
                {TABS.map((tab) => (
                    <a
                        key={tab}
                        href="#"
                        className={clsx(
                            "border-r pl-2 pr-[9px] whitespace-nowrap",
                            tab === "GBPUSD,H1" ? "border-black bg-white text-black" : "border-[#999]"
                        )}
                    >
                        {tab}
                    </a>
                ))}
                <span className="ml-auto flex gap-3 pr-2 text-[7px]">
                    <button type="button" aria-label="前へ">◂</button>
                    <button type="button" aria-label="次へ">▸</button>
                </span>
            </nav>
            <footer className="flex h-[19px] items-center border-t-2 border-[#f8f8f8] text-[9px] leading-4 [font-feature-settings:'palt']">
                <span className="flex-1 pl-px">F1キーでヘルプが表示されます</span>
                <span className="w-[92px] border-l border-[#bbb] pl-[3px]">Default</span>
                <span className="w-20 border-l border-[#bbb] pl-[3px]">2026.09.10 18:00</span>
                {["O: 1.35291", "H: 1.35336", "L: 1.35240", "C: 1.35297", "V: 8256"].map((text) => (
                    <span key={text} className="w-[55px] border-l border-[#bbb] pl-[3px]">
                        {text}
                    </span>
                ))}
                <span className="flex w-[118px] items-center gap-1 border-l border-[#bbb] pl-[2px]">
                    <svg viewBox="0 0 20 10" className="h-[10px] w-5" shapeRendering="crispEdges" aria-hidden="true">
                        <path d="M1.500 0v8M3.500 0v8M5.500 1v8M7.500 1v8M9.500 0v9M11.500 0v9M13.500 1v9M15.500 1v9M17.500 0v10M19.500 0v10" stroke="#222" />
                        <path d="M1.500 8v2M3.500 8v2M5.500 9v1" stroke="#2fae2f" />
                    </svg>
                    2312/3 kb
                </span>
            </footer>
        </div>
    )
}
